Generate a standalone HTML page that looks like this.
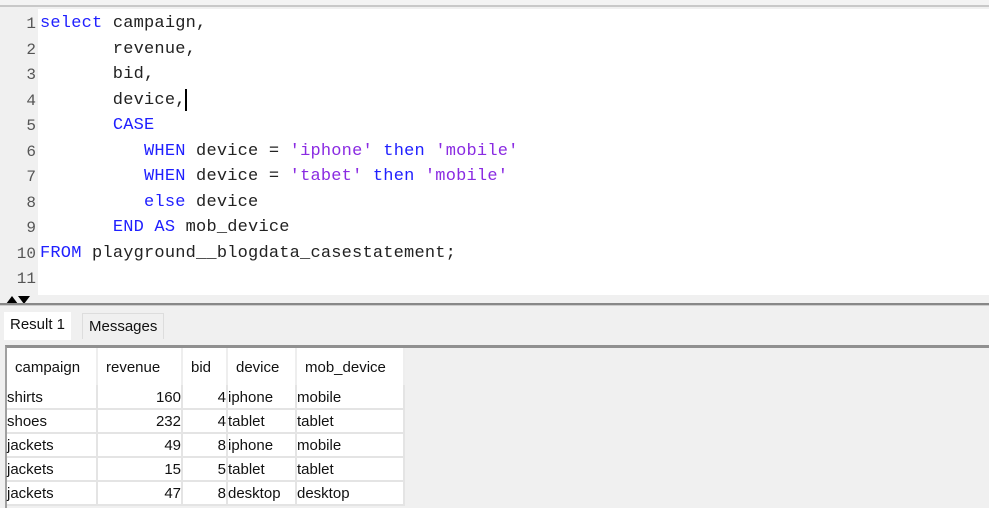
<!DOCTYPE html>
<html><head><style>
*{margin:0;padding:0;box-sizing:border-box}
html,body{width:989px;height:508px;overflow:hidden}
body{background:#f0f0f0;position:relative;font-family:"Liberation Sans",Arial,sans-serif}
#top{position:absolute;left:0;top:0;width:989px;height:7px;background:#f3f3f3;border-bottom:2px solid #c8c8c8}
#ed{position:absolute;left:0;top:9px;width:989px;height:286px;background:#fff}
#gut{position:absolute;left:0;top:9px;width:38px;height:286px;background:#f0f0f0}
.ln{position:absolute;font-family:"Liberation Mono",monospace;font-size:17px;letter-spacing:0.2px;white-space:pre;color:#222;line-height:20px}
.n{position:absolute;width:36px;text-align:right;font-family:"Liberation Mono",monospace;font-size:16px;color:#555;line-height:20px}
.k{color:#2020ff}.s{color:#8a2be2}
#sep{position:absolute;left:0;top:303px;width:989px;height:3px;border-top:2px solid #888;border-bottom:1px solid #ccc}
.tab{position:absolute;font-size:15px;color:#111;line-height:26px;padding:0 6px}
#grid{position:absolute;left:5px;top:345px;width:984px;height:163px;border-top:3px solid #909090;border-left:2px solid #a0a0a0}
table{position:absolute;left:7px;top:348px;border-collapse:collapse;font-size:15px;color:#111}
td{height:24px;border-right:2px solid #e4e4e4;border-bottom:2px solid #e4e4e4;background:#fff;padding:2px 0 0 0;line-height:20px;white-space:nowrap}
tr.h td{height:37px;padding:2px 8px 0;border-right:2px solid #eee;border-bottom:none}
.r{text-align:right}
</style></head><body>
<div id="top"></div>
<div id="ed"></div>
<div id="gut"></div>
<div class="n" style="top:14px">1</div>
<div class="n" style="top:40px">2</div>
<div class="n" style="top:65px">3</div>
<div class="n" style="top:91px">4</div>
<div class="n" style="top:116px">5</div>
<div class="n" style="top:142px">6</div>
<div class="n" style="top:167px">7</div>
<div class="n" style="top:193px">8</div>
<div class="n" style="top:218px">9</div>
<div class="n" style="top:244px">10</div>
<div class="n" style="top:269px">11</div>
<div class="ln" style="left:40px;top:14px"><span class="k">select</span> campaign,</div>
<div class="ln" style="left:40px;top:40px">       revenue,</div>
<div class="ln" style="left:40px;top:65px">       bid,</div>
<div class="ln" style="left:40px;top:91px">       device,</div>
<div style="position:absolute;left:185px;top:89px;width:2px;height:22px;background:#000"></div>
<div class="ln" style="left:40px;top:116px">       <span class="k">CASE</span></div>
<div class="ln" style="left:40px;top:142px">          <span class="k">WHEN</span> device = <span class="s">'iphone'</span> <span class="k">then</span> <span class="s">'mobile'</span></div>
<div class="ln" style="left:40px;top:167px">          <span class="k">WHEN</span> device = <span class="s">'tabet'</span> <span class="k">then</span> <span class="s">'mobile'</span></div>
<div class="ln" style="left:40px;top:193px">          <span class="k">else</span> device</div>
<div class="ln" style="left:40px;top:218px">       <span class="k">END AS</span> mob_device</div>
<div class="ln" style="left:40px;top:244px"><span class="k">FROM</span> playground__blogdata_casestatement;</div>
<svg style="position:absolute;left:6px;top:296px" width="36" height="8"><path d="M0 8 L6 0 L12 8Z M12 0 L24 0 L18 8Z" fill="#000"/></svg>
<div id="sep"></div>
<div class="tab" style="left:4px;top:312px;background:#fff;height:28px">Result 1</div>
<div class="tab" style="left:82px;top:313px;border:1px solid #ddd;border-bottom:none;height:26px">Messages</div>
<div id="grid"></div>
<table>
<tr class="h"><td style="width:90px">campaign</td><td style="width:85px">revenue</td><td style="width:45px">bid</td><td style="width:69px">device</td><td style="width:108px">mob_device</td></tr>
<tr><td>shirts</td><td class="r">160</td><td class="r">4</td><td>iphone</td><td>mobile</td></tr>
<tr><td>shoes</td><td class="r">232</td><td class="r">4</td><td>tablet</td><td>tablet</td></tr>
<tr><td>jackets</td><td class="r">49</td><td class="r">8</td><td>iphone</td><td>mobile</td></tr>
<tr><td>jackets</td><td class="r">15</td><td class="r">5</td><td>tablet</td><td>tablet</td></tr>
<tr><td>jackets</td><td class="r">47</td><td class="r">8</td><td>desktop</td><td>desktop</td></tr>
</table>
</body></html>
